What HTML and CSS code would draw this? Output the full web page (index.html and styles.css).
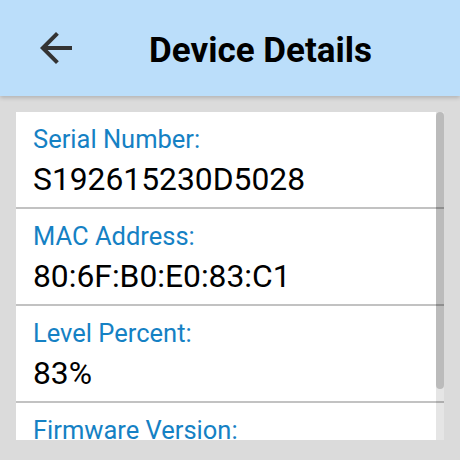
FILE: index.html
```html
<!DOCTYPE html>
<html>
<head>
<meta charset="utf-8">
<link rel="stylesheet" href="styles.css">
</head>
<body>
<header class="appbar">
  <svg class="back" viewBox="0 0 24 24" width="48" height="48"><path d="M20 11H7.83l5.59-5.59L12 4l-8 8 8 8 1.41-1.41L7.83 13H20v-2z"/></svg>
  <h1 class="title">Device Details</h1>
</header>
<main class="content">
  <section class="panel">
    <div class="list">
      <div class="row"><div class="label">Serial Number:</div><div class="value">S192615230D5028</div></div>
      <div class="row"><div class="label">MAC Address:</div><div class="value">80:6F:B0:E0:83:C1</div></div>
      <div class="row"><div class="label">Level Percent:</div><div class="value">83%</div></div>
      <div class="row"><div class="label">Firmware Version:</div><div class="value">1.0.4</div></div>
    </div>
    <div class="scrollbar"><div class="thumb"></div></div>
  </section>
</main>
</body>
</html>
```
FILE: styles.css
```css
html, body {
  margin: 0;
  padding: 0;
  width: 460px;
  height: 460px;
  overflow: hidden;
  background: #dbdbdb;
  font-family: Roboto, "Noto Sans", sans-serif;
}
.appbar {
  position: relative;
  z-index: 1;
  height: 96px;
  background: #bbdefa;
  display: flex;
  align-items: center;
  padding-left: 32px;
  box-shadow: 0 2px 4px rgba(0,0,0,0.18);
}
.back {
  fill: #333333;
  flex: none;
}
.title {
  margin: 0 0 0 69px;
  padding-top: 5px;
  font-size: 35px;
  line-height: 40px;
  font-weight: 700;
  color: #000;
}
.content {
  padding: 16px 16px 20px 16px;
}
.panel {
  position: relative;
  height: 328px;
  background: #fff;
  overflow: hidden;
}
.row {
  padding: 12px 17px 9px 17px;
  border-bottom: 2px solid #c2c2c2;
  height: 74px;
}
.label {
  font-size: 25.5px;
  line-height: 30px;
  color: #1581c4;
}
.value {
  margin-top: 6px;
  font-size: 31.8px;
  line-height: 38px;
  color: #000;
}
.scrollbar {
  position: absolute;
  top: 0;
  right: 0;
  width: 8px;
  height: 100%;
  background: rgba(0,0,0,0.1);
}
.thumb {
  height: 277px;
  border-radius: 4px;
  background: rgba(0,0,0,0.18);
}
```
